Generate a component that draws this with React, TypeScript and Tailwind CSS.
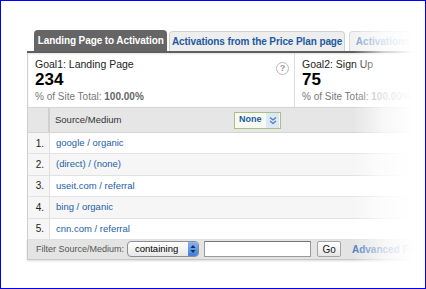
import React from "react";

const rows = [
  "google / organic",
  "(direct) / (none)",
  "useit.com / referral",
  "bing / organic",
  "cnn.com / referral",
];

function GoalBox({ title, value, last }: { title: string; value: string; last?: boolean }) {
  return (
    <div className="flex flex-col pl-[7px] pt-[4px] whitespace-nowrap">
      <div className="text-[10.5px] leading-[14px] text-[#222]">{title}</div>
      <div className="text-[17px] leading-[18px] font-bold text-black">{value}</div>
      <div className="text-[10px] leading-[14px] mt-[1px] text-[#777]">
        % of Site Total: <span className={last ? "font-bold text-[#aaa]" : "font-bold text-[#666]"}>100.00%</span>
      </div>
    </div>
  );
}

export default function App() {
  return (
    <div
      className="relative w-[426px] h-[289px] overflow-hidden bg-white border border-[#0000ff]"
      style={{ fontFamily: '"Liberation Sans", Arial, sans-serif' }}
    >
      <div className="ml-[26px] mt-[29px] w-[400px]">
        {/* Tabs */}
        <div className="flex items-end pl-[7px] gap-[2px] h-[21px] whitespace-nowrap">
          <div className="h-[21px] w-[137px] rounded-t-[4px] bg-[#656565] text-white font-bold text-[10px] tracking-[-0.1px] flex items-center justify-center">
            Landing Page to Activation
          </div>
          <div className="h-[20px] w-[180px] rounded-t-[4px] bg-[#eeeeee] border border-b-0 border-[#d0d0d0] text-[#1d5aa0] font-bold text-[10px] tracking-[-0.1px] flex items-center justify-center">
            Activations from the Price Plan page
          </div>
          <div className="h-[20px] ml-[2px] w-[80px] rounded-t-[4px] bg-[#f2f2f2] border border-b-0 border-[#d8d8d8] text-[#7fa2cc] font-bold text-[10px] flex items-center pl-[6px]">
            Activations
          </div>
        </div>
        <div className="h-[2px] bg-[#5f5f5f]" />

        {/* Goals */}
        <div className="flex h-[54px] border-l border-[#cfcfcf] shadow-[inset_0_1px_2px_rgba(0,0,0,0.12)]">
          <div className="relative w-[267px] border-r border-[#dcdcdc]">
            <GoalBox title="Goal1: Landing Page" value="234" />
            <div className="absolute right-[5px] top-[9px] w-[13px] h-[13px] rounded-full border border-[#bbb] text-[9px] leading-[11px] text-[#999] text-center font-bold">
              ?
            </div>
          </div>
          <GoalBox title="Goal2: Sign Up" value="75" last />
        </div>

        {/* Table header */}
        <div className="flex h-[26px] bg-[#e6e6e6] border-t border-b border-[#d4d4d4] border-l border-l-[#cfcfcf] whitespace-nowrap">
          <div className="w-[22px] border-r-2 border-[#d0d0d0]" />
          <div className="flex items-center pl-[5px] text-[9.5px] text-[#333] w-[184px]">Source/Medium</div>
          <div className="flex items-center">
            <div className="flex items-center h-[17px] w-[47px] border border-[#a8bf8a] bg-[#f7f9f3]">
              <span className="pl-[4px] text-[9px] font-bold text-[#1d5aa0] w-[31px]">None</span>
              <span className="flex items-center justify-center w-[13px] h-[15px] bg-[#dde8f5]">
                <svg width="8" height="9" viewBox="0 0 8 9" fill="none" stroke="#4a7cc0" strokeWidth="1.3">
                  <path d="M1 1.5 L4 4 L7 1.5" />
                  <path d="M1 5 L4 7.5 L7 5" />
                </svg>
              </span>
            </div>
          </div>
        </div>

        {/* Rows */}
        <div className="border-l border-[#cfcfcf] whitespace-nowrap">
          {rows.map((r, i) => (
            <div
              key={r}
              className={
                "flex h-[21.4px] border-b border-[#e2e2e2] " + (i % 2 === 1 ? "bg-[#f6f6f6]" : "bg-white")
              }
            >
              <div className="w-[22px] bg-[#f6f6f6] border-r border-[#e0e0e0] text-[10px] text-[#222] flex items-center justify-end pr-[5px]">
                {i + 1}.
              </div>
              <div className="flex items-center pl-[6px] text-[9.5px] text-[#2360a8]">{r}</div>
            </div>
          ))}
        </div>

        {/* Filter bar */}
        <div className="flex items-center h-[20px] bg-[#e4e4e4] border-l border-b border-[#c8c8c8] shadow-[0_1px_2px_rgba(0,0,0,0.15)] whitespace-nowrap">
          <span className="pl-[8px] text-[9px] text-[#555] w-[101px]">Filter Source/Medium:</span>
          <div className="flex items-center h-[16px] w-[72px] rounded-[4px] border border-[#8e8e8e] bg-gradient-to-b from-white to-[#e8e8e8]">
            <span className="pl-[7px] text-[9.5px] text-black w-[60px]">containing</span>
            <span className="flex flex-col items-center justify-center w-[10px] h-[14px] rounded-r-[3px] bg-gradient-to-b from-[#8ab4ec] to-[#3f7fd6]">
              <svg width="6" height="10" viewBox="0 0 6 10" fill="#0d2f66">
                <path d="M3 1 L5.5 4 L0.5 4 Z" />
                <path d="M3 9 L5.5 6 L0.5 6 Z" />
              </svg>
            </span>
          </div>
          <div className="ml-[5px] h-[16px] w-[110px] border border-[#9a9a9a] border-t-[#777] bg-white" />
          <div className="ml-[6px] h-[16px] w-[24px] rounded-[2px] border border-[#a5a5a5] bg-gradient-to-b from-white to-[#e6e6e6] text-[10px] text-[#222] flex items-center justify-center">
            Go
          </div>
          <span className="ml-[11px] text-[10px] font-bold text-[#4a7cc0]">Advanced Filter</span>
        </div>
      </div>

      {/* right fade */}
      <div className="absolute top-0 bottom-0 left-[352px] w-[60px] bg-gradient-to-r from-white/0 via-white/70 to-white" />
      <div className="absolute top-0 bottom-0 left-[412px] right-0 bg-white" />
    </div>
  );
}
